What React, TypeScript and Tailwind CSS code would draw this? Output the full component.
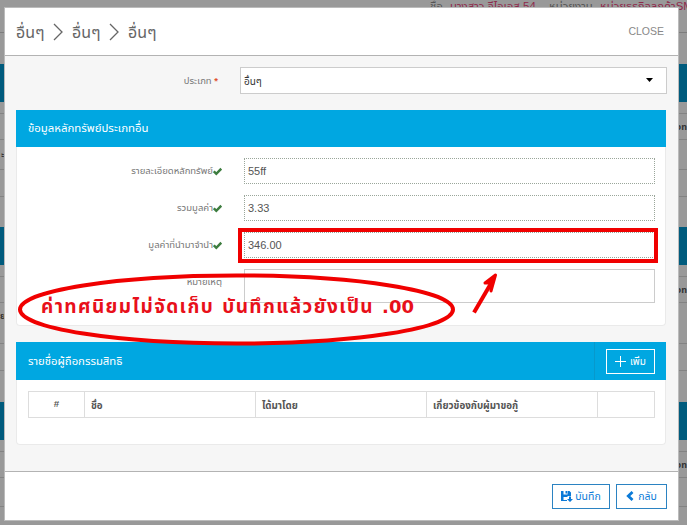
import React from "react";

function Section({ bar, gap, edgeRight }: { bar: string; gap: React.ReactNode; edgeRight: string }) {
  return (
    <div>
      <div className={`bg-[#005b7d] ${bar}`} />
      <div className="h-3 border-b border-[#838383]" />
      <div className="flex h-[26px] items-center justify-end border-b border-[#838383] pt-[3px] text-[9px] font-bold text-[#333]">
        <span className="whitespace-nowrap">{edgeRight}</span>
      </div>
      {gap}
    </div>
  );
}

function Backdrop() {
  return (
    <div className="flex h-[525px] flex-col bg-[#999]">
      <div className="h-[33px] shrink-0 border-b border-[#7d7d7d]">
        <div className="-mt-[3px] flex whitespace-nowrap pl-[430px] text-[11.4px] leading-[18px] text-[#8f2a4c]">
          <span className="w-[20px] shrink-0 text-[#555]">ชื่อ</span>
          <span className="w-[99px] shrink-0">นางสาว จีไอเอส 54</span>
          <span className="w-[51px] shrink-0 text-[#555]">หน่วยงาน</span>
          <span className="shrink-0">หน่วยธุรกิจลูกค้าSM</span>
        </div>
      </div>
      <div className="h-[31px] shrink-0" />
      <Section
        bar="h-[38px]"
        edgeRight="วท"
        gap={<div className="flex h-[30px] items-center border-b border-[#838383] pl-px text-[9px] font-bold text-[#333]">ะ</div>}
      />
      <div className="h-[27px] shrink-0 border-b border-[#838383]" />
      <div className="h-[30px] shrink-0" />
      <Section
        bar="h-[38px]"
        edgeRight="วท"
        gap={<div className="flex h-[41px] items-center border-b border-[#838383] pb-3 text-[9px] font-bold text-[#333]">ย</div>}
      />
      <div className="h-[27px] shrink-0 border-b border-[#838383]" />
      <div className="h-[31px] shrink-0" />
      <Section bar="h-[38px]" edgeRight="วท" gap={<div className="h-[29px] border-b border-[#838383]" />} />
    </div>
  );
}

function Chevron() {
  return (
    <svg width="10" height="18" viewBox="0 0 10 18" fill="none" stroke="#666" strokeWidth="1.3" className="-mt-[3px]">
      <path d="M1 1 L9 9 L1 17" />
    </svg>
  );
}

function Check() {
  return (
    <svg width="9" height="9" viewBox="0 0 9 9" fill="none" stroke="#3d7d3f" strokeWidth="2.5">
      <path d="M.8 4.300 3.300 6.800 8.300 1.700" />
    </svg>
  );
}

function BackIcon() {
  return (
    <svg width="8" height="10" viewBox="0 0 8 10" fill="none" stroke="#0b7ad8" strokeWidth="2.800">
      <path d="M6.500 1 2.300 5l4.200 4" />
    </svg>
  );
}

function SaveIcon() {
  return (
    <svg width="12" height="11" viewBox="0 0 12 11" fill="#0b7ad8">
      <path fillRule="evenodd" d="M0 0h2.500v3.500H6.500V0h2L10 1.500V5H6.500v1H2.500v3H6v1H0z M4.500 0H6v2.500H4.500z" />
      <path d="M8 5.500h2V8h2L9 11 6 8h2z" />
    </svg>
  );
}

function Field({ label, value }: { label: string; value: string }) {
  return (
    <div className="flex h-[37px]">
      <div className="flex h-[26px] w-[205px] items-center justify-end text-[9.5px] text-[#777]">
        <span className="pt-px">{label}</span>
        <Check />
      </div>
      <div className="ml-[22px] flex h-[26px] w-[411px] items-center border border-dotted border-[#9aa69a] pl-[3px] text-[11px] text-[#555]">
        {value}
      </div>
    </div>
  );
}

export default function App() {
  return (
    <div className="relative h-[525px] w-[687px] overflow-hidden font-['Liberation_Sans','Noto_Sans_Thai',sans-serif]">
      <Backdrop />
      <div className="absolute left-1 top-[7px] flex h-[514px] w-[675px] flex-col border border-[#bbb] bg-[#f6f6f6]">
        <header className="flex h-12 shrink-0 items-center justify-between border-b border-[#b3b3b3] bg-white pl-[11px] pr-[14px]">
          <div className="flex items-center gap-[9px] pt-[3px] text-[16px] text-[#666]">
            <span className="w-7">อื่นๆ</span>
            <Chevron />
            <span className="w-7">อื่นๆ</span>
            <Chevron />
            <span className="w-7">อื่นๆ</span>
          </div>
          <button className="text-[10.5px] text-[#888]">CLOSE</button>
        </header>

        <main className="flex flex-1 flex-col">
          <div className="mt-[11px] flex h-[27px] items-center">
            <label className="w-[213px] pt-[2px] text-right text-[9.5px] text-[#777]">
              ประเภท <span className="font-bold text-[#e0512f]">*</span>
            </label>
            <div className="ml-[22px] flex h-[27px] w-[427px] items-center justify-between border border-[#ccc] bg-white pl-[3px] pr-[13px] text-[10px] text-[#333]">
              <span className="pt-[2px]">อื่นๆ</span>
              <svg width="7" height="4" viewBox="0 0 7 4" className="-mt-px"><path d="M0 0h7L3.5 4z" /></svg>
            </div>
          </div>

          <section className="ml-[11px] mt-4 w-[650px]">
            <h2 className="flex h-[37px] items-center bg-[#00a7e1] pl-3 text-[11.4px] text-white">ข้อมูลหลักทรัพย์ประเภทอื่น</h2>
            <div className="h-[179px] rounded-b border border-t-0 border-[#eaeaea] bg-white pt-[11px]">
              <Field label="รายละเอียดหลักทรัพย์" value="55ff" />
              <Field label="รวมมูลค่า" value="3.33" />
              <Field label="มูลค่าที่นำมาจำนำ" value="346.00" />
              <div className="flex">
                <div className="flex h-[26px] w-[205px] items-center justify-end text-[9.5px] text-[#777]">หมายเหตุ</div>
                <div className="ml-[22px] h-[34px] w-[411px] border border-[#ccc]" />
              </div>
            </div>
          </section>

          <section className="ml-[11px] mt-4 w-[650px]">
            <div className="flex h-[38px] items-center bg-[#00a7e1] pl-3 text-white">
              <h2 className="flex-1 pt-px text-[11.3px]">รายชื่อผู้ถือกรรมสิทธิ</h2>
              <div className="flex h-full w-[72px] items-center border-l border-[#0799cc] pl-[11px]">
                <button className="flex h-[25px] w-[49px] items-center justify-center gap-1 border border-white text-[10px]">
                  <svg width="11" height="11" stroke="white"><path d="M5.500 0v11M0 5.500h11" /></svg>
                  <span className="pt-px">เพิ่ม</span>
                </button>
              </div>
            </div>
            <div className="h-[65px] rounded-b border border-t-0 border-[#eaeaea] bg-white pl-[11px] pt-[11px]">
              <div className="flex h-[27px] w-[627px] items-stretch border border-[#ddd] text-[9.8px] font-bold text-[#555]">
                <div className="flex w-[56px] items-center justify-center border-r border-[#ddd]">#</div>
                <div className="flex w-[171px] items-center border-r border-[#ddd] pl-[6px] pt-[3px]">ชื่อ</div>
                <div className="flex w-[171px] items-center border-r border-[#ddd] pl-[6px] pt-[3px]">ได้มาโดย</div>
                <div className="flex w-[171px] items-center border-r border-[#ddd] pl-[6px] pt-[3px]">เกี่ยวข้องกับผู้มาขอกู้</div>
              </div>
            </div>
          </section>
        </main>

        <footer className="flex h-[49px] shrink-0 items-center justify-end gap-[6px] border-t border-[#b3b3b3] bg-white pr-[11px] text-[10.5px] text-[#0b7ad8]">
          <button className="flex h-[25px] w-[58px] items-center justify-center gap-[2px] border border-[#2b83c2]">
            <SaveIcon />
            <span className="pt-[2px]">บันทึก</span>
          </button>
          <button className="flex h-[25px] w-[51px] items-center justify-center gap-1 border border-[#2b83c2]">
            <BackIcon />
            <span className="pt-[2px]">กลับ</span>
          </button>
        </footer>
      </div>

      <svg className="pointer-events-none absolute left-0 top-0" width="687" height="525" fill="none" stroke="#f00000">
        <rect x="240" y="230" width="416" height="31" strokeWidth="4" />
        <ellipse cx="236.500" cy="309.500" rx="216.500" ry="34" strokeWidth="4" />
        <path d="M474 312.500 L493 280" strokeWidth="4" />
        <path d="M485 283 L495.500 275 L491 291 L490.500 283z" fill="#f00000" strokeWidth="3" strokeLinejoin="round" />
      </svg>
      <p className="absolute left-[41px] top-[294px] whitespace-nowrap font-['DejaVu_Sans','Noto_Sans_Thai',sans-serif] text-[19px] font-bold leading-[24px] tracking-[1.400px] text-[#e8101a]">
        ค่าทศนิยมไม่จัดเก็บ บันทึกแล้วยังเป็น <span className="text-[18px] tracking-normal">.00</span>
      </p>
    </div>
  );
}
